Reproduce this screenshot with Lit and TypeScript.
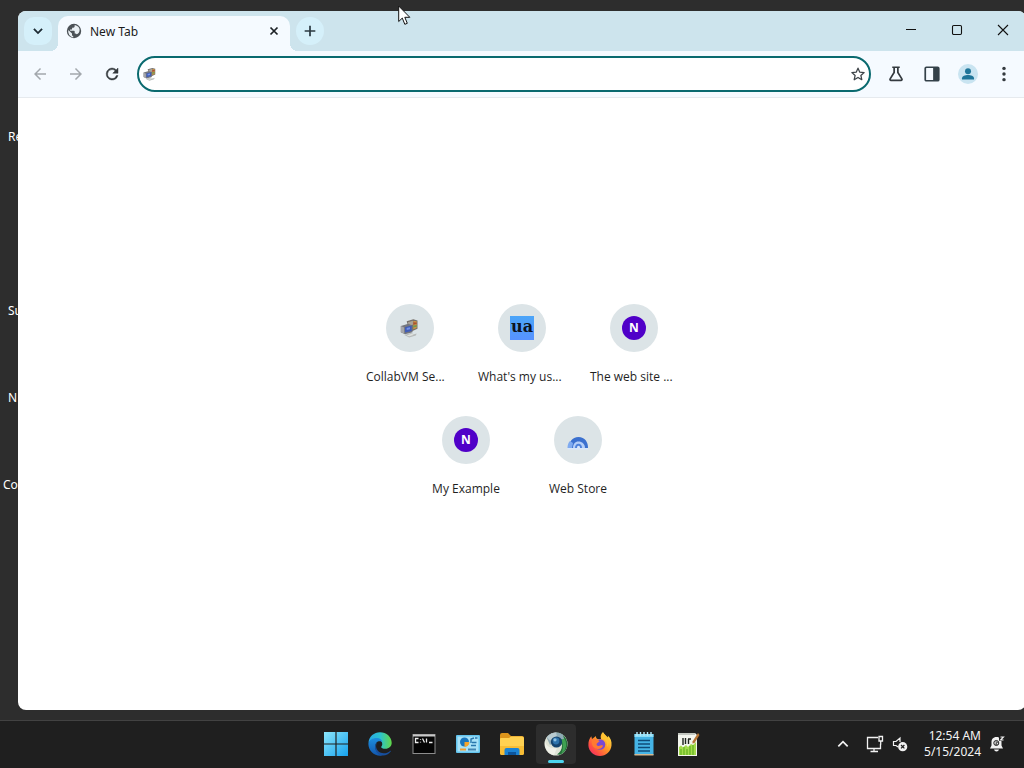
import { LitElement, html, css, svg } from "lit";
import { customElement, property } from "lit/decorators.js";
import { classMap } from "lit/directives/class-map.js";

const reset = css`
  * { box-sizing: border-box; }
  button { border: 0; padding: 0; margin: 0; background: none; color: inherit; font: inherit; display: flex; align-items: center; justify-content: center; }
  svg { display: block; flex: none; }
`;

const icon = (size: number, body: unknown, box = 24) =>
  html`<svg width=${size} height=${size} viewBox="0 0 ${box} ${box}" fill="none" aria-hidden="true">${body}</svg>`;

/* ---------- browser glyphs ---------- */
const chevronDown = svg`<path d="M5 8.500l7 7 7-7" stroke="#1d2b33" stroke-width="3.200"/>`;
const globe = svg`<circle cx="8" cy="8" r="7.200" fill="#4b5156"/>
  <path d="M2.300 7l3.700 3.600v1.200c0 .7.600 1.300 1.200 1.300v1.300A6 6 0 012.300 7zM8.600 2.200v1.300c0 .7-.6 1.200-1.200 1.200H6.100v1.200c0 .4-.3.7-.7.7H4.100v1.200H8c.4 0 .7.3.7.7v1.900h.6c.6 0 1.100.4 1.300.9a5.900 5.900 0 002.200-1.500c.6-1 .9-2.200.8-3.300-.2-2-1.900-3.700-4-4.300z" fill="#e9eff3"/>`;
const cross = svg`<path d="M6 6l12 12M18 6L6 18" stroke="#1d2226" stroke-width="3"/>`;
const plus = svg`<path d="M12 4v16M4 12h16" stroke="#2b3a42" stroke-width="2.600"/>`;
const back = svg`<path d="M20 11H7.800l5.600-5.600L12 4l-8 8 8 8 1.400-1.400L7.800 13H20z" fill="#a3a8ad"/>`;
const forward = svg`<path d="M12 4l-1.400 1.400L16.200 11H4v2h12.200l-5.600 5.600L12 20l8-8z" fill="#a3a8ad"/>`;
const reload = svg`<path d="M17.650 6.350A7.950 7.950 0 0012 4a8 8 0 108 10h-2.200A6 6 0 1112 6c1.660 0 3.140.69 4.220 1.780L13 11h7V4z" fill="#33383c" stroke="#33383c" stroke-width=".6"/>`;
const star = svg`<path d="M12 3.300l2.700 6 6.500.6-4.900 4.300 1.400 6.400-5.700-3.400-5.700 3.400 1.400-6.400-4.900-4.300 6.500-.6z" stroke="#3d4348" stroke-width="1.900" stroke-linejoin="round"/>`;
const flask = svg`<path d="M7 3h10M9.500 3v7L4.200 18.500c-.6 1 0 2 1.100 2h13.400c1.100 0 1.700-1 1.100-2L14.500 10V3" stroke="#343a3f" stroke-width="2.300"/>`;
const sidePanel = svg`<rect x="3" y="3" width="18" height="18" rx="1.500" stroke="#344149" stroke-width="2.300"/><path d="M13.500 3H20q1 0 1 1v16q0 1-1 1h-6.500z" fill="#344149"/>`;
const person = svg`<circle cx="10" cy="10" r="10" fill="#c9e4f1"/><circle cx="10" cy="7.200" r="3" fill="#1f7599"/><path d="M4 15.500v-1.300c0-2.100 3.200-3.200 6-3.200s6 1.100 6 3.200v1.300z" fill="#1f7599"/>`;
const dots = svg`<circle cx="12" cy="4.500" r="2.300" fill="#343a3f"/><circle cx="12" cy="12" r="2.300" fill="#343a3f"/><circle cx="12" cy="19.500" r="2.300" fill="#343a3f"/>`;
const minimise = svg`<path d="M1 5.500h10" stroke="#111"/>`;
const maximise = svg`<rect x="1.500" y="1.500" width="9" height="9" rx="1.200" stroke="#111" stroke-width="1.100"/>`;
const closeWindow = svg`<path d="M1 1l10 10M11 1L1 11" stroke="#111" stroke-width="1.100"/>`;

/* ---------- site marks ---------- */
const collab = svg`
  <path d="M5 20.500l8-2.500 4 1.500 3-1-1 2.500-8 2.500z" fill="#b7bbba"/><path d="M8 21l6-2 3 1-6 2z" fill="#dfe1de"/>
  <path d="M8 4l8-2.500 5 1.500v10l-8 3.500-2-2.500z" fill="#77706a"/><path d="M9.500 5l6-1.800V8L10 9z" fill="#aaa399"/><path d="M16 3.500l4 .5v8l-4 1.500z" fill="#d39643"/><path d="M16 5l4 .3v2L16 8z" fill="#a75236"/><path d="M16 9l4-.5v2l-4 1z" fill="#6f9a55"/>
  <path d="M1 9.500l9-2.500 5 2v8l-9 2.500-5-2.500z" fill="#74767e"/><path d="M6 11l8-2v6.500l-8 2z" fill="#3f5cb8"/><path d="M8 12l4-1v2.500l-4 1z" fill="#7593e6"/><path d="M1 9.500l4 2v7.500l-4-2z" fill="#a5a6aa"/>`;
const rainbow = svg`
  <path d="M3 20c0-6 3-11 9.500-11S22 14 22 20z" fill="#3b70cf"/><path d="M1.500 20c0-3 .9-5.500 2.500-7l3 2-1 5z" fill="#7faaf0"/>
  <path d="M7 20c0-4 2-6.500 5.500-6.500S19 16 19 20z" fill="#b4cef8"/><path d="M9 20c0-2.500 1.200-4.200 3.500-4.200S16 17.500 16 20z" fill="#4f82db"/><path d="M11 20c0-1.500.5-2.300 1.500-2.300S14 18.500 14 20z" fill="#d8e5fb"/><path d="M1.500 20H22v1.500H1.500z" fill="#d8e6fa"/>`;

/* ---------- taskbar marks ---------- */
const startMark = svg`<defs><linearGradient id="w" x2="1" y2="1"><stop stop-color="#8ce6fb"/><stop offset="1" stop-color="#16a2ee"/></linearGradient></defs>
  <path d="M0 0h11.400v11.400H0zM12.600 0H24v11.400H12.600zM0 12.600h11.400V24H0zM12.600 12.600H24V24H12.600z" fill="url(#w)"/>`;
const edge = svg`<defs><linearGradient id="e1" x1="0" x2="1"><stop stop-color="#28a8e8"/><stop offset=".5" stop-color="#2bc3cf"/><stop offset="1" stop-color="#62d846"/></linearGradient>
  <linearGradient id="e2" x2="0" y2="1"><stop stop-color="#1d8fe0"/><stop offset="1" stop-color="#1256ac"/></linearGradient></defs>
  <path d="M.5 10.500C1.200 4.500 6 .3 12 .3c6.500 0 11.700 4.700 11.700 10.500 0 3.600-2.700 6-6.300 6-2.600 0-4.200-.9-4.200-1.900 0-.8 1.100-1.200 1.100-3 0-2.300-2-4.200-5.200-4.200C5.200 7.700 1.700 9.500.5 10.500z" fill="url(#e1)"/>
  <path d="M.4 11.500C1 8 4.500 5.900 8.600 5.900c3.400 0 5.600 2.100 5.800 4.500-1-1.300-2.900-1.600-4.500-.8-3.500 1.800-3.700 7.500 0 11.300 1 .9 2.300 1.900 4.500 2.500C7 24.900.1 19 .4 11.500z" fill="url(#e2)"/>
  <path d="M9.900 9.600c-3.200 3.300-2 9 2.200 10.900 3.600 1.600 7.400.7 10-1.600.5-.4 1 .1.600.6-2 2.800-5 4.300-8.300 4.100-6.900-.5-10-9.800-4.500-14z" fill="#174f9e"/>`;
const terminal = svg`<rect x="1" y="2.500" width="22" height="19" fill="#050505" stroke="#8d8d8d"/><path d="M1 2.500h22v2H1z" fill="#c9c9c9"/>
  <path d="M6.500 6.500h-3v4h3M8.500 7v.8M8.500 9.800v.8M10.500 6.500l2 4M14.500 6.500v4M17 10.500h3.500" stroke="#ededed" stroke-width="1.300"/>`;
const control = svg`<rect x="0" y="3" width="24" height="18" rx="1" fill="#63c4ee"/><rect x="1.500" y="4.500" width="21" height="15" fill="#a8e2f8"/>
  <circle cx="8.500" cy="10" r="4.500" fill="#1976be"/><path d="M8.500 10h5a5 5 0 01-5 5z" fill="#f5a52b"/><path d="M15 11V7l3-1M19 6h2.500M16 10.500h4.500M15 13.500h5" stroke="#2776ad" stroke-width="1.400"/><path d="M4 17.500h6" stroke="#ed9e34" stroke-width="2"/><path d="M12 17.500h8" stroke="#4486b3" stroke-width="2"/>`;
const folder = svg`<path d="M0 3q0-2 2-2h6l3 3h11q2 0 2 2v4H0z" fill="#dc941b"/><path d="M0 7q0-1 1-1h8l2-1.500h11q2 0 2 2V21q0 2-2 2H2q-2 0-2-2z" fill="#ffd152"/><path d="M0 14h24v7q0 2-2 2H2q-2 0-2-2z" fill="#f8bd35"/>
  <path d="M4.500 23v-5q0-2 2-2h11q2 0 2 2v5z" fill="#1b83d4"/><path d="M8 20h8v3H8z" fill="#0d559c"/>`;
const chromium = svg`<circle cx="12" cy="12" r="11.500" fill="#dfe3d6"/>
  <path d="M13 .6A11.500 11.500 0 0116 22.800l-3-.3c3-2 5-5 5-9z" fill="#25713a"/><path d="M17 3a11.500 11.500 0 010 19.200c2-4 2.500-8 1-13z" fill="#3fa052"/>
  <path d="M2.600 5.500A11.500 11.500 0 0119 2.800L20 7l-8 1-6 5z" fill="#8faab4"/><path d="M3 5.500C5 2.500 8 .8 12 .6l1 4-7 4z" fill="#b9cbd0"/>
  <circle cx="12.500" cy="10" r="5.600" fill="#15446e"/><circle cx="12" cy="9" r="3.400" fill="#2d73ac"/><circle cx="11" cy="7.800" r="1.600" fill="#8cc0e2"/>
  <path d="M1 9c1 5 5 8 12 7l-3 7C4 22 0 16 1 9z" fill="#f0f1e8"/>`;
const firefox = svg`<defs><linearGradient id="f" x1="1" x2="0" y2="1"><stop stop-color="#fff04a"/><stop offset=".45" stop-color="#ff9827"/><stop offset=".75" stop-color="#ff4b45"/><stop offset="1" stop-color="#e52478"/></linearGradient></defs>
  <path d="M15 0c1.500 2.500 3.200 3.800 4.800 5.500.2-.8.1-1.200 0-1.900C22.500 6 24 9.500 23.500 13.500 22.800 19.500 18 24 12 24S.5 19.500.4 13.300C.3 9 1.500 6.500 3.300 4.300L4 7l4-3c-.3 1.500.5 2.300 1.500 3H13c-1-3 .3-5.600 2-7z" fill="url(#f)"/>
  <circle cx="12" cy="12.500" r="5.300" fill="#7849d4"/><path d="M4 8c3-1.500 6-1 7.500 1.200L9.500 11c-1.500.5-1 3 1 3 1.800 0 2.500-1 4.500-.5-.5 2.500-3 4-5.500 3.500C5 16 3 12.500 4 8z" fill="#ff7a30"/><path d="M13 7c4-.5 7.500 3 6 8 2.500-3.500 2.300-8-.5-10.500L15 1z" fill="#ffc332"/>`;
const notepad = svg`<path d="M2.500 2h19v21h-19z" fill="#45b4e6"/><path d="M2.500 2h19v3h-19z" fill="#8bddf7"/><path d="M5 0v4M8.500 0v4M12 0v4M15.500 0v4M19 0v4" stroke="#b5e8f9" stroke-width="1.400"/><path d="M6 8.500h12M6 12h12M6 15.500h12M6 19h12" stroke="#0f4b78" stroke-width="1.700"/><path d="M2.500 22h19v1.500h-19z" fill="#d5b890"/>`;
const greenNotes = svg`<path d="M2 1h17l2 2v21H2z" fill="#f4f6ef"/><path d="M3 15l2-1.500 2 2 3-2.500 2 2 3-3 2 1 3-3v13H3z" fill="#a5dc4c"/><path d="M5 17v6M8 15v8M11 17v6M14 14v9M17 13v10" stroke="#63b321" stroke-width="1.200"/><path d="M2 1h17v2H2z" fill="#c3c7c0"/>
  <path d="M7 6v7M9.500 6v6M12 7h3M12.500 7v5" stroke="#20241f" stroke-width="1.400"/><path d="M22 1l1.500 2-5 8-2 .5v-2z" fill="#b57434"/>`;
const caretUp = svg`<path d="M5 15.500l7-7 7 7" stroke="#f2f2f2" stroke-width="2.600"/>`;
const network = svg`<path d="M12 2.500H1.500v11h13V9M8 13.500v3M4.500 16.500H12" stroke="#f2f2f2" stroke-width="1.300"/><path d="M13 1.500h3.500V6H13zM14.700 6v3.500" stroke="#f2f2f2" stroke-width="1.300"/>`;
const volume = svg`<path d="M6 11L4 9.500H1.500v-4H4l4-3.500v4" stroke="#f2f2f2" stroke-width="1.200"/><circle cx="10.700" cy="10.700" r="4.600" fill="#f2f2f2"/><path d="M9 9l3.400 3.400M12.400 9L9 12.400" stroke="#1f1f1f" stroke-width="1.200"/>`;
const bell = svg`<path d="M7.500 1C4 1 2.500 3.500 2.500 6v3.500L1 12.500h13l-1.500-3V6C12.500 3.500 11 1 7.500 1z" fill="#f2f2f2"/><path d="M5 13.500h5q-.5 2-2.500 2T5 13.500z" fill="#f2f2f2"/><circle cx="7.300" cy="7" r="2.500" stroke="#1f1f1f"/><path d="M6.500 6h2L6.500 8.300h2" stroke="#1f1f1f" stroke-width=".9"/><path d="M10 0h6v5h-6z" fill="#1f1f1f"/><path d="M11.500 1h3l-3 3h3" stroke="#f2f2f2" stroke-width="1.100"/>`;

@customElement("browser-window")
class BrowserWindow extends LitElement {
  static styles = [reset, css`
    :host { display: flex; flex-direction: column; overflow: hidden; border-radius: 8px; background: #fff; color: #1b1b1b; }
    .strip { display: flex; height: 40px; padding-left: 6px; background: #cde4ed; }
    .round { width: 28px; height: 28px; border-radius: 10px; background: #d5f0fa; align-self: center; }
    .strip .plus { border-radius: 50%; margin-left: 6px; }
    .tab { position: relative; display: flex; align-items: center; gap: 8px; width: 232px; height: 35px; margin: 5px 0 0 6px; padding: 0 8px 5px; border-radius: 10px 10px 0 0; background: #f5faff; font-size: 12px; }
    .tab::before, .tab::after { content: ""; position: absolute; bottom: 0; width: 8px; height: 8px; }
    .tab::before { right: 100%; background: radial-gradient(circle at 0 0, transparent 8px, #f5faff 8px); }
    .tab::after { left: 100%; background: radial-gradient(circle at 100% 0, transparent 8px, #f5faff 8px); }
    .title { flex: 1; }
    .tab button { width: 16px; height: 16px; }
    .controls { display: flex; margin-left: auto; }
    .controls button { width: 46px; padding-bottom: 2px; }
    .toolbar { display: flex; align-items: center; height: 47px; padding: 0 4px; background: #f5faff; border-bottom: 1px solid #e6eaee; }
    .tool { width: 36px; height: 36px; }
    .omnibox { flex: 1; display: flex; align-items: center; height: 36px; margin: 0 7px; padding: 0 3px 0 4px; border: 2px solid #0a6a6f; border-radius: 18px; background: #fff; }
    .omnibox input { flex: 1; min-width: 0; height: 24px; margin: 0 6px; border: 0; outline: 0; background: none; font: 14px "Noto Sans", sans-serif; }
    .omnibox button { width: 16px; height: 16px; }
    .page { flex: 1; display: flex; flex-direction: column; align-items: center; justify-content: center; }
    .row { display: flex; }
    .tile { width: 112px; height: 112px; padding: 12px; display: flex; flex-direction: column; align-items: center; gap: 17px; color: #1f1f1f; font-family: "Open Sans", sans-serif; font-size: 12px; line-height: 16px; text-decoration: none; white-space: nowrap; }
    .disc { flex: none; width: 48px; height: 48px; border-radius: 50%; background: #dce4e7; display: grid; place-items: center; }
    .label { width: 88px; text-align: center; }
    .cut { text-align: left; }
    .letter { width: 24px; height: 24px; border-radius: 50%; background: #5000c8; color: #fff; font: bold 12px/24px "Open Sans", sans-serif; text-align: center; }
    .ua { width: 24px; height: 24px; background: linear-gradient(#4ba5f8, #5792ff); color: #0c1420; font: bold 16px/22px "DejaVu Serif", serif; display: flex; justify-content: center; overflow: hidden; }
  `];

  private tool(label: string, body: unknown, size = 18, box = 24) {
    return html`<button class="tool" aria-label=${label}>${icon(size, body, box)}</button>`;
  }

  private tile(label: string, mark: unknown, cut = false) {
    return html`<a class="tile" href="#"><span class="disc">${mark}</span><span class=${classMap({ label: true, cut })}>${label}</span></a>`;
  }

  render() {
    const letter = html`<span class="letter">N</span>`;
    return html`
      <div class="strip">
        <button class="round" aria-label="Search tabs">${icon(14, chevronDown)}</button>
        <div class="tab">${icon(16, globe, 16)}<span class="title">New Tab</span><button aria-label="Close tab">${icon(14, cross)}</button></div>
        <button class="round plus" aria-label="Open tab">${icon(16, plus)}</button>
        <div class="controls">
          <button aria-label="Minimize">${icon(12, minimise, 12)}</button>
          <button aria-label="Maximize">${icon(12, maximise, 12)}</button>
          <button aria-label="Close">${icon(12, closeWindow, 12)}</button>
        </div>
      </div>
      <div class="toolbar">
        ${this.tool("Back", back)}${this.tool("Forward", forward)}${this.tool("Reload", reload)}
        <div class="omnibox">${icon(14, collab)}<input type="text" aria-label="Address" /><button aria-label="Bookmark">${icon(16, star)}</button></div>
        ${this.tool("Experiments", flask)}${this.tool("Side panel", sidePanel)}${this.tool("Profile", person, 20, 20)}${this.tool("Menu", dots)}
      </div>
      <main class="page">
        <div class="row">
          ${this.tile("CollabVM Se...", icon(20, collab), true)}
          ${this.tile("What's my us...", html`<span class="ua">ua</span>`, true)}
          ${this.tile("The web site ...", letter, true)}
        </div>
        <div class="row">${this.tile("My Example", letter)}${this.tile("Web Store", icon(24, rainbow))}</div>
      </main>`;
  }
}

@customElement("task-bar")
class TaskBar extends LitElement {
  @property({ attribute: false }) apps = [
    { name: "Start", mark: startMark }, { name: "Edge", mark: edge }, { name: "Command Prompt", mark: terminal },
    { name: "Control Panel", mark: control }, { name: "File Explorer", mark: folder }, { name: "Chromium", mark: chromium, active: true },
    { name: "Firefox", mark: firefox }, { name: "Notepad", mark: notepad }, { name: "Notepad++", mark: greenNotes },
  ];

  static styles = [reset, css`
    :host { display: grid; grid-template-columns: 1fr auto 1fr; align-items: center; height: 48px; padding-bottom: 1px; border-top: 1px solid #424242; background: #1f1f1f; color: #f4f4f4; }
    .apps { grid-column: 2; display: flex; gap: 4px; }
    .app { position: relative; width: 40px; height: 40px; border-radius: 4px; }
    .active { background: #2d2d2d; }
    .active::after { content: ""; position: absolute; left: 12px; right: 12px; bottom: 1px; height: 3px; border-radius: 2px; background: #4cd4ee; }
    .tray { display: flex; align-items: center; justify-content: flex-end; gap: 8px; padding-right: 19px; }
    .more { margin-right: 7px; }
    .clock { margin-left: 8px; text-align: right; font-size: 12px; line-height: 16px; white-space: nowrap; }
  `];

  render() {
    return html`
      <nav class="apps">${this.apps.map((a) => html`<button class=${classMap({ app: true, active: !!a.active })} aria-label=${a.name}>${icon(24, a.mark)}</button>`)}</nav>
      <div class="tray">
        <button class="more" aria-label="Hidden icons">${icon(16, caretUp)}</button>
        <button aria-label="Network">${icon(18, network, 18)}</button>
        <button aria-label="Volume">${icon(16, volume, 16)}</button>
        <div class="clock">12:54 AM<br />5/15/2024</div>
        <button aria-label="Notifications">${icon(16, bell, 16)}</button>
      </div>`;
  }
}

@customElement("app-root")
class AppRoot extends LitElement {
  static styles = [reset, css`
    :host { display: flex; flex-direction: column; height: 100vh; overflow: hidden; background: #2d2d2d; font-family: "Noto Sans", "Open Sans", sans-serif; position: relative; }
    .desktop { position: relative; flex: 1; min-height: 0; overflow: hidden; }
    .icons { display: grid; grid-auto-rows: 87px; align-items: center; width: 76px; padding: 93px 0 0 8px; color: #fff; font-size: 12px; }
    .wide { margin-left: -5px; }
    browser-window { position: absolute; inset: 11px -2px 10px 18px; }
    .pointer { position: absolute; left: 398px; top: 5px; }
  `];

  render() {
    return html`
      <div class="desktop">
        <div class="icons"><span>Re</span><span></span><span>Su</span><span>N</span><span class="wide">Co</span></div>
        <browser-window></browser-window>
      </div>
      <task-bar></task-bar>
      <svg class="pointer" width="13" height="21" viewBox="0 0 13 21" aria-hidden="true"><path d="M.7 1v15.500l3.600-3.400 2.500 6.200 2.500-1-2.500-6h5z" fill="#fff" stroke="#111"/></svg>`;
  }
}
